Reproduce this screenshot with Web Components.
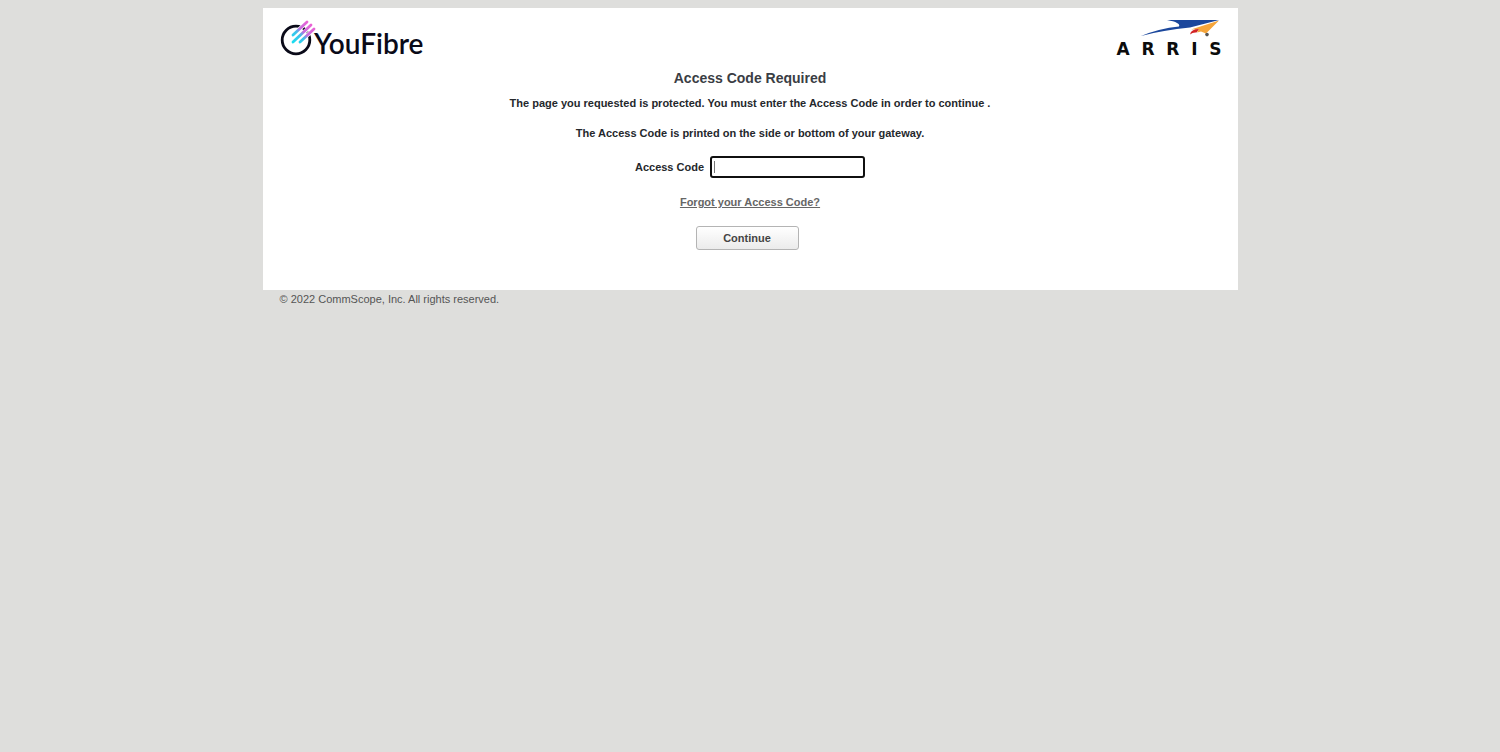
<!DOCTYPE html>
<html lang="en">
<head>
<meta charset="utf-8">
<meta name="viewport" content="width=device-width, initial-scale=1">
<title>Access Code Required</title>
<style>
body {
    margin: 0;
    background: #dededc;
    color: #25282c;
    font: bold 11px/16px "Liberation Sans", Arial, sans-serif;
}
</style>
</head>
<body>
<gw-page>
    <gw-header slot="header">
        <gw-provider-logo></gw-provider-logo>
        <gw-vendor-logo></gw-vendor-logo>
    </gw-header>
    <gw-access-form heading="Access Code Required">
        <p>The page you requested is protected. You must enter the Access Code in order to continue .</p>
        <p>The Access Code is printed on the side or bottom of your gateway.</p>
    </gw-access-form>
    <span slot="footer">© 2022 CommScope, Inc. All rights reserved.</span>
</gw-page>

<script>
class GwPage extends HTMLElement {
    constructor() {
        super();
        this.attachShadow({mode: 'open'}).innerHTML =
`<style>
:host {display: block; width: 65%; min-width: 520px; margin: 0 auto; padding-top: 8px;}
main {background: #fff; padding: 12px 16px 40px;}
footer {padding: 1px 17px; color: #555; font-weight: normal;}
</style>
<main>
    <slot name="header"></slot>
    <slot></slot>
</main>
<footer><slot name="footer"></slot></footer>`;
    }
}
window.customElements.define('gw-page', GwPage);

class GwHeader extends HTMLElement {
    constructor() {
        super();
        this.attachShadow({mode: 'open'}).innerHTML =
`<style>
:host {display: flex; justify-content: space-between; align-items: flex-start;}
</style>
<slot></slot>`;
    }
}
window.customElements.define('gw-header', GwHeader);

class GwProviderLogo extends HTMLElement {
    constructor() {
        super();
        this.attachShadow({mode: 'open'}).innerHTML =
`<style>
:host {display: block;}
svg {display: block;}
text {font: 600 28px "Lato", sans-serif; fill: #0a0a18;}
</style>
<svg width="152" height="40" viewBox="0 0 152 40" role="img" aria-label="YouFibre">
    <defs>
        <linearGradient id="beam" gradientUnits="userSpaceOnUse" x1="15" y1="24" x2="33" y2="4">
            <stop offset="0" stop-color="#18dff0"/>
            <stop offset=".4" stop-color="#3fbfea"/>
            <stop offset=".58" stop-color="#c56ade"/>
            <stop offset="1" stop-color="#ef62d4"/>
        </linearGradient>
    </defs>
    <circle cx="17" cy="20" r="13.8" fill="none" stroke="#0a0a18" stroke-width="2.8"/>
    <path d="M14 15 28 2M14 22 33 5M21 22 35 9" fill="none" stroke="#fff" stroke-width="4"/>
    <g fill="none" stroke="url(#beam)" stroke-width="2.8" stroke-linecap="round">
        <path d="M14 15 28 2"/>
        <path d="M14 22 32 5"/>
        <path d="M21 22 35 9"/>
    </g>
    <text x="35" y="34">YouFibre</text>
</svg>`;
    }
}
window.customElements.define('gw-provider-logo', GwProviderLogo);

class GwVendorLogo extends HTMLElement {
    constructor() {
        super();
        this.attachShadow({mode: 'open'}).innerHTML =
`<style>
:host {display: block; width: 105px;}
svg {display: block; width: 100%; height: 20px;}
div {display: flex; justify-content: space-between; color: #0c0c0c; font: bold 17px/18px "DejaVu Sans", sans-serif;}
</style>
<svg viewBox="0 0 105 20" aria-hidden="true">
    <path d="M50 0H102L73 7.5Q46 10 24 16Q42 8.5 62 6.5Q64 2.5 50 0Z" fill="#1b479c"/>
    <path d="M102 .6 74 9.5 82 9 80 12.5 84 11.5 89 13.5Z" fill="#f5a53b"/>
    <path d="M73 14.5Q74 9 82 9Q80.5 11 79.5 12.5Q76 12 73 14.5Z" fill="#d22325"/>
    <circle cx="90" cy="14.6" r="1.8" fill="#555"/>
</svg>
<div><span>A</span><span>R</span><span>R</span><span>I</span><span>S</span></div>`;
    }
}
window.customElements.define('gw-vendor-logo', GwVendorLogo);

class GwAccessForm extends HTMLElement {
    constructor() {
        super();
        this.attachShadow({mode: 'open'}).innerHTML =
`<style>
:host {display: block; text-align: center;}
h1 {margin: 0; padding: 8px 0 7px; color: #3a3d44; font-size: 14px; line-height: 20px;}
::slotted(p) {margin: 0 0 14px;}
form {display: flex; flex-direction: column; align-items: center; gap: 16px; padding-top: 1px;}
.field {display: flex; align-items: center; gap: 6px;}
input {
    box-sizing: border-box;
    width: 155px;
    height: 22px;
    padding: 0 3px;
    border: 2px solid #101010;
    border-radius: 3px;
    outline: none;
    background: #fff linear-gradient(#777, #777) 2px center / 1px 12px no-repeat;
    caret-color: transparent;
    font: inherit;
}
input:not(:placeholder-shown) {background-image: none; caret-color: auto;}
a {color: #666;}
button {
    box-sizing: border-box;
    min-width: 103px;
    height: 24px;
    margin-right: 6px;
    padding: 0 12px;
    border: 1px solid #b4b4b4;
    border-radius: 3px;
    background: linear-gradient(#fff, #ebebeb);
    color: #444;
    font: inherit;
}
</style>
<h1></h1>
<slot></slot>
<form>
    <div class="field">
        <label for="code">Access Code</label>
        <input id="code" type="password" placeholder=" " autocomplete="off">
    </div>
    <a href="#forgot">Forgot your Access Code?</a>
    <button type="submit">Continue</button>
</form>`;
    }

    connectedCallback() {
        this.shadowRoot.querySelector('h1').textContent = this.getAttribute('heading');
        this.shadowRoot.querySelector('form').addEventListener('submit', function(event) {
            event.preventDefault();
        });
        this.shadowRoot.querySelector('input').focus();
    }
}
window.customElements.define('gw-access-form', GwAccessForm);
</script>
</body>
</html>
